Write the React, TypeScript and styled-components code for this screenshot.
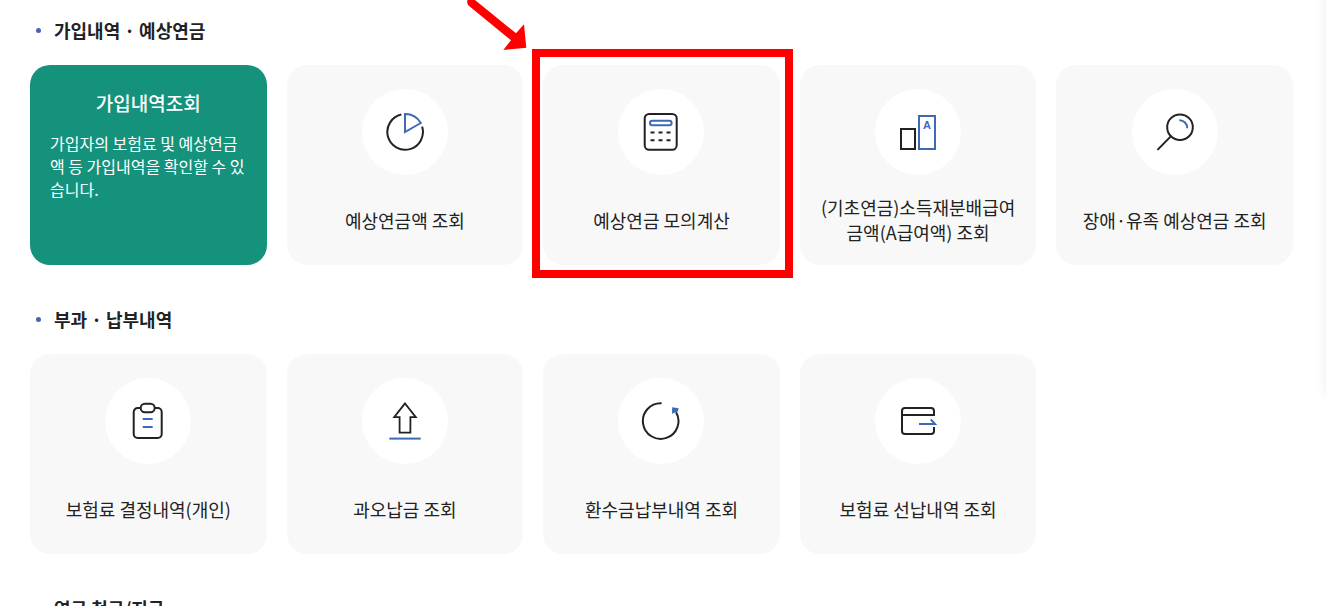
import React from 'react';
import styled, { createGlobalStyle, css } from 'styled-components';

const INK = '#222222';
const BLUE = '#3d69b5';

const GlobalStyle = createGlobalStyle`
  *, *::before, *::after { box-sizing: border-box; }
  body {
    margin: 0;
    background: #ffffff;
    color: ${INK};
    font-family: "Noto Sans CJK KR", "Noto Sans", sans-serif;
  }
`;

const Page = styled.div`
  position: relative;
  height: 100vh;
  overflow: hidden;
`;

const Content = styled.main`
  display: flex;
  flex-direction: column;
  gap: 40px;
  padding: 16px 33px 40px 30px;
`;

const Section = styled.section`
  display: flex;
  flex-direction: column;
  gap: 21px;
`;

const Heading = styled.h2`
  display: flex;
  align-items: center;
  gap: 13px;
  margin: 0;
  padding-left: 6px;
  font-size: 18px;
  line-height: 28px;
  font-weight: 700;

  &::before {
    content: '';
    width: 5px;
    height: 5px;
    border-radius: 50%;
    background: #4a63b0;
  }
`;

const CardGrid = styled.ul`
  display: grid;
  grid-template-columns: repeat(5, minmax(0, 1fr));
  gap: 20px;
  margin: 0;
  padding: 0;
  list-style: none;
`;

const CardItem = styled.li`
  position: relative;
  display: flex;
`;

const CardLink = styled.a<{ $active?: boolean }>`
  flex: 1;
  display: flex;
  flex-direction: column;
  align-items: center;
  min-height: 200px;
  padding: 24px 20px 20px;
  border-radius: 20px;
  background: #f8f8f8;
  color: inherit;
  text-decoration: none;
  ${({ $active }) =>
    $active &&
    css`
      background: #15927c;
      color: #ffffff;
    `}
`;

const IconCircle = styled.span`
  display: flex;
  align-items: center;
  justify-content: center;
  width: 86px;
  height: 86px;
  border-radius: 50%;
  background: #ffffff;
`;

const CardLabel = styled.span`
  display: flex;
  align-items: center;
  min-height: 50px;
  margin-top: 20px;
  font-size: 18px;
  line-height: 25px;
  font-weight: 400;
  text-align: center;
  white-space: pre-line;
`;

const CardTitle = styled.strong`
  font-size: 19px;
  line-height: 28px;
  font-weight: 500;
`;

const CardText = styled.span`
  align-self: stretch;
  margin-top: 15px;
  font-size: 16px;
  line-height: 23px;
  word-break: break-all;
`;

const HighlightFrame = styled.span`
  position: absolute;
  inset: -16px -13px -13px -11px;
  border: 8px solid #ff0000;
  pointer-events: none;
`;

const PointerArrow = styled.svg`
  position: absolute;
  left: -77px;
  top: -65px;
  pointer-events: none;
`;

const SidePanel = styled.aside`
  position: absolute;
  top: -20px;
  left: 100%;
  width: 80px;
  height: 424px;
  border-radius: 20px;
  box-shadow: 0 0 12px rgba(0, 0, 0, 0.08);
`;

function Icon({ children }: { children: React.ReactNode }) {
  return (
    <svg width="40" height="40" viewBox="0 0 40 40" fill="none" stroke={INK} strokeWidth="2" aria-hidden="true">
      {children}
    </svg>
  );
}

const pieIcon = (
  <Icon>
    <path d="M16.3 2.6A17.8 17.8 0 1 0 37.1 14.6" />
    <path d="M20 2V20L35.8 11A18 18 0 0 0 20 2Z" stroke={BLUE} />
  </Icon>
);

const calculatorIcon = (
  <Icon>
    <rect x="3.7" y="2" width="32" height="35.8" rx="4.5" />
    <rect x="9" y="8.7" width="21.6" height="4.6" rx="2.3" stroke={BLUE} />
    <path d="M9.5 20.4h4M17.5 20.4h4M25.5 20.4h4M9.5 28.2h4M17.5 28.2h4M25.5 28.2h4" />
  </Icon>
);

const barsIcon = (
  <Icon>
    <rect x="3" y="17" width="14" height="20" />
    <rect x="21" y="4" width="16" height="33" stroke={BLUE} />
    <text
      x="29"
      y="17"
      textAnchor="middle"
      fontFamily="Liberation Sans, sans-serif"
      fontSize="11"
      fontWeight="700"
      fill={BLUE}
      stroke="none"
    >
      A
    </text>
  </Icon>
);

const magnifierIcon = (
  <Icon>
    <circle cx="25" cy="15.2" r="12.8" />
    <path d="M15.8 24.4L3 37.4" strokeLinecap="round" />
    <path d="M24.3 8.2A7.6 7.6 0 0 1 32.2 16.2" stroke={BLUE} />
  </Icon>
);

const clipboardIcon = (
  <Icon>
    <path d="M12.7 7H9.7a4 4 0 0 0-4 4V33a4 4 0 0 0 4 4H29.7a4 4 0 0 0 4-4V11a4 4 0 0 0-4-4H26.7" />
    <rect x="12.7" y="2.8" width="14" height="8.4" rx="4.2" />
    <path d="M14.7 18h10M14.7 26h10" stroke={BLUE} />
  </Icon>
);

const uploadIcon = (
  <Icon>
    <path d="M20 2.4L9.2 16.2H14.6V31.6H25.4V16.2H30.8Z" strokeWidth="1.8" />
    <path d="M4.3 37.6H35.7" stroke={BLUE} />
  </Icon>
);

const refreshIcon = (
  <Icon>
    <path d="M20.6 2.3A17.8 17.8 0 1 0 35.1 11.2" />
    <path d="M31.2 6.2L37.6 7.2L36.8 10.6L31 12.8Z" fill={BLUE} stroke="none" />
  </Icon>
);

const walletIcon = (
  <Icon>
    <path d="M36 14H4M36 15V10a3 3 0 0 0-3-3H7a3 3 0 0 0-3 3V30a3 3 0 0 0 3 3H33a3 3 0 0 0 3-3V26" />
    <path d="M21 23H37L32.8 18.4" stroke={BLUE} />
  </Icon>
);

interface Card {
  label: string;
  icon?: React.ReactNode;
  description?: string;
  highlighted?: boolean;
}

const sections: { title: string; cards: Card[] }[] = [
  {
    title: '가입내역 · 예상연금',
    cards: [
      {
        label: '가입내역조회',
        description: '가입자의 보험료 및 예상연금액 등 가입내역을 확인할 수 있습니다.',
      },
      { label: '예상연금액 조회', icon: pieIcon },
      { label: '예상연금 모의계산', icon: calculatorIcon, highlighted: true },
      { label: '(기초연금)소득재분배급여\n금액(A급여액) 조회', icon: barsIcon },
      { label: '장애·유족 예상연금 조회', icon: magnifierIcon },
    ],
  },
  {
    title: '부과 · 납부내역',
    cards: [
      { label: '보험료 결정내역(개인)', icon: clipboardIcon },
      { label: '과오납금 조회', icon: uploadIcon },
      { label: '환수금납부내역 조회', icon: refreshIcon },
      { label: '보험료 선납내역 조회', icon: walletIcon },
    ],
  },
  { title: '연금 청구/지급', cards: [] },
];

function ServiceCard({ card }: { card: Card }) {
  return (
    <CardItem>
      {card.description ? (
        <CardLink href="#" $active>
          <CardTitle>{card.label}</CardTitle>
          <CardText>{card.description}</CardText>
        </CardLink>
      ) : (
        <CardLink href="#">
          <IconCircle>{card.icon}</IconCircle>
          <CardLabel>{card.label}</CardLabel>
        </CardLink>
      )}
      {card.highlighted && (
        <>
          <HighlightFrame />
          <PointerArrow width="62" height="52" viewBox="0 0 62 52" aria-hidden="true">
            <path d="M9 0L50 33.3L58 24.3L60.3 47.7L37.3 50L45 40.2L2.5 5.5Q0.5 3 1.5 0Z" fill="#ff0000" />
          </PointerArrow>
        </>
      )}
    </CardItem>
  );
}

export default function App() {
  return (
    <Page>
      <GlobalStyle />
      <Content>
        {sections.map((section) => (
          <Section key={section.title}>
            <Heading>{section.title}</Heading>
            {section.cards.length > 0 && (
              <CardGrid>
                {section.cards.map((card) => (
                  <ServiceCard key={card.label} card={card} />
                ))}
              </CardGrid>
            )}
          </Section>
        ))}
      </Content>
      <SidePanel />
    </Page>
  );
}
